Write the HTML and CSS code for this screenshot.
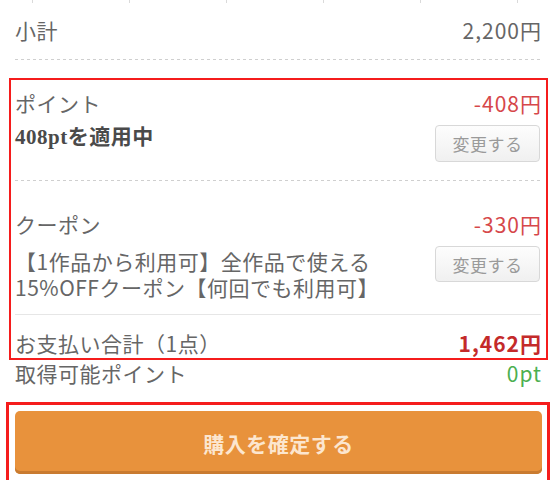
FILE: index.html
```html
<!DOCTYPE html>
<html lang="ja">
<head>
    <meta charset="UTF-8">
    <meta name="viewport" content="width=device-width, initial-scale=1.0">
    <title>購入確認</title>
    <link rel="stylesheet" href="styles.css">
</head>

<body>
    <!-- Subtotal -->
    <div class="row subtotal">
        <span class="label">小計</span>
        <span class="price">2,200円</span>
    </div>
    <div class="dashed outer-line"></div>

    <!-- Discounts + total -->
    <div class="summary">
        <div class="section point">
            <div class="row">
                <span class="label">ポイント</span>
                <span class="minus">-408円</span>
            </div>
            <div class="detail">
                <div class="applied">408ptを適用中</div>
                <button class="change">変更する</button>
            </div>
        </div>
        <div class="dashed"></div>

        <div class="section coupon">
            <div class="row">
                <span class="label">クーポン</span>
                <span class="minus">-330円</span>
            </div>
            <div class="detail">
                <div class="coupon-name">
                    <div>【1作品から利用可】全作品で使える</div>
                    <div>15%OFFクーポン【何回でも利用可】</div>
                </div>
                <button class="change">変更する</button>
            </div>
        </div>
        <div class="solid"></div>

        <div class="row total">
            <span class="label">お支払い合計（1点）</span>
            <span class="total-price">1,462円</span>
        </div>
    </div>

    <div class="row earn">
        <span class="label">取得可能ポイント</span>
        <span class="earn-pt">0pt</span>
    </div>

    <!-- Purchase button -->
    <div class="buy-wrap">
        <button class="buy">購入を確定する</button>
    </div>
</body>
</html>
```

FILE: styles.css
```css
body {
    margin: 0;
    font-family: "Noto Sans CJK JP", "Noto Sans", sans-serif;
    font-size: 21px;
    letter-spacing: 0.5px;
    color: #666;
    background: #fff;
    overflow: hidden;
}
.row {
    display: flex;
    justify-content: space-between;
    align-items: center;
    line-height: 26px;
}
.subtotal {
    height: 59px;
    padding: 0 15px;
    box-sizing: border-box;
    /* bits of the dashed line from the block above */
    background: repeating-linear-gradient(90deg, transparent 0 32px, #dadada 32px 33px, transparent 33px 97px) no-repeat;
    background-size: 100% 3px;
}
.price, .minus, .total-price, .earn-pt {
    letter-spacing: 1px;
    margin-right: -1px;
}
.dashed {
    height: 1px;
    background: repeating-linear-gradient(90deg, #cfcfcf 0 3px, transparent 3px 6px);
}
.outer-line {
    margin: 0 15px;
}
.solid {
    height: 1px;
    background: #e6e6e6;
}

.summary {
    margin: 18px 8px 0 9px;
    padding: 0 5px 0 4px;
    border: 2px solid #f51c1c;
}
.section.point {
    padding: 10px 0 18px;
}
.section.coupon {
    padding: 30px 0 14px;
}
.detail {
    display: flex;
    justify-content: space-between;
    align-items: flex-start;
    margin-top: 8px;
}
.coupon .detail {
    margin-top: 9px;
}
.applied {
    font-family: "Liberation Serif", "Noto Sans CJK JP", serif;
    font-weight: bold;
    color: #4a4a4a;
    line-height: 26px;
}
.coupon-name {
    line-height: 26px;
    margin-top: 2px;
}
.change {
    width: 105px;
    height: 37px;
    margin: 1px 1px 0 0;
    padding: 0;
    border: 1px solid #d8d8d8;
    border-radius: 4px;
    background: linear-gradient(#fdfdfd, #f0f0f0);
    color: #9a9a9a;
    font-family: inherit;
    font-size: 17px;
    letter-spacing: 0.5px;
}
.coupon .change {
    margin-top: 0;
    height: 36px;
}
.minus {
    color: #d6474a;
}
.total {
    padding: 15px 0 2px;
}
.total-price {
    color: #c42a2a;
    font-weight: bold;
}

.earn {
    padding: 0 15px;
}
.earn-pt {
    color: #4caf50;
}

.buy-wrap {
    margin: 16px 6px 0;
    padding: 6px 5px 6px 6px;
    border: 3px solid #f51c1c;
}
.buy {
    display: block;
    width: 100%;
    height: 63px;
    border: none;
    border-radius: 5px;
    background: #e8923c;
    box-shadow: inset 0 -3px 0 #c97b30;
    color: #fce6cf;
    font-family: inherit;
    font-size: 21px;
    font-weight: bold;
    letter-spacing: 0.5px;
}
```
